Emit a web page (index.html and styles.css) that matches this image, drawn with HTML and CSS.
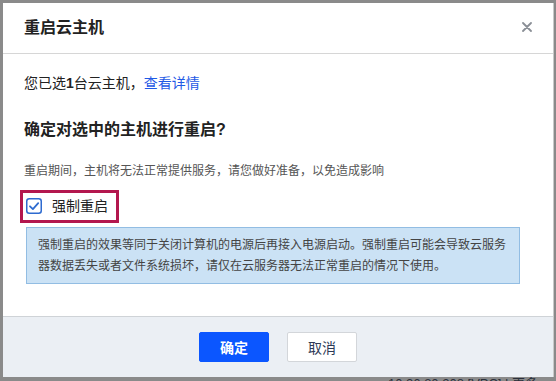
FILE: index.html
```html
<!DOCTYPE html>
<html lang="zh-CN">
<head>
<meta charset="utf-8">
<title>重启云主机</title>
<link rel="stylesheet" href="styles.css">
</head>
<body>
<div class="backdrop-text">10.26.80.208 [VPC] | 更多</div>
<div class="modal">
  <div class="modal-header">
    <div class="modal-title">重启云主机</div>
    <svg class="close" width="10" height="10" viewBox="0 0 10 10"><path d="M1 1L9 9M9 1L1 9" stroke="#8a8f96" stroke-width="1.8" stroke-linecap="round"/></svg>
  </div>
  <div class="modal-body">
    <p class="selected">您已选<b>1</b>台云主机，<a class="link">查看详情</a></p>
    <h3 class="question">确定对选中的主机进行重启?</h3>
    <p class="desc">重启期间，主机将无法正常提供服务，请您做好准备，以免造成影响</p>
    <div class="force-row">
      <svg class="checkbox" width="16" height="16" viewBox="0 0 16 16"><rect x="0.75" y="0.75" width="14.5" height="14.5" rx="2.5" fill="#fff" stroke="#2e6bd0" stroke-width="1.5"/><path d="M4 8.3L6.9 11.1L12.2 5.2" fill="none" stroke="#2e6bd0" stroke-width="1.8" stroke-linecap="round" stroke-linejoin="round"/></svg>
      <span class="force-label">强制重启</span>
    </div>
    <div class="info">强制重启的效果等同于关闭计算机的电源后再接入电源启动。强制重启可能会导致云服务器数据丢失或者文件系统损坏，请仅在云服务器无法正常重启的情况下使用。</div>
  </div>
  <div class="modal-footer">
    <button class="btn btn-primary">确定</button>
    <button class="btn btn-default">取消</button>
  </div>
</div>
</body>
</html>
```
FILE: styles.css
```css
html, body {
  margin: 0;
  padding: 0;
}
body {
  width: 556px;
  height: 381px;
  overflow: hidden;
  background: #8a8a8a;
  font-family: "Liberation Sans", "Noto Sans CJK SC", sans-serif;
  color: #222;
  position: relative;
  padding: 3px 3px 0 3px;
  box-sizing: border-box;
}
.backdrop-text {
  position: absolute;
  left: 388px;
  top: 376px;
  font-size: 13px;
  line-height: 16px;
  color: #2a2f3a;
  white-space: nowrap;
}
.modal {
  position: relative;
  width: 550px;
  height: 374px;
  background: #fff;
  display: flex;
  flex-direction: column;
  box-shadow: 1px 0 0 #c9c9c9;
}
.modal-header {
  height: 50px;
  flex: none;
  border-bottom: 1px solid #d6d6d6;
  display: flex;
  align-items: center;
  justify-content: space-between;
  padding: 0 21px 0 21px;
}
.modal-title {
  font-size: 16px;
  font-weight: 700;
  color: #222;
  line-height: 22px;
  margin-top: 0;
}
.close {
  display: block;
  margin-top: -2px;
}
.modal-body {
  flex: 1;
  padding: 19px 21px 0 21px;
}
.selected {
  margin: 0;
  font-size: 14px;
  line-height: 20px;
  color: #222;
}
.selected b {
  font-weight: 700;
}
.link {
  color: #1f5ae6;
}
.question {
  margin: 26px 0 0 0;
  font-size: 16px;
  font-weight: 700;
  line-height: 22px;
  color: #222;
}
.desc {
  margin: 21px 0 0 0;
  font-size: 12px;
  line-height: 18px;
  color: #555;
}
.force-row {
  display: inline-flex;
  align-items: center;
  gap: 10px;
  margin: 10px 0 0 -4px;
  border: 3px solid #b3174e;
  padding: 5px 8px 6px 3px;
}
.checkbox {
  display: block;
}
.force-label {
  font-size: 14px;
  line-height: 16px;
  color: #222;
}
.info {
  margin: 4px 0 0 2px;
  width: 494px;
  box-sizing: border-box;
  background: #cbe2f5;
  border: 1px solid #92bde3;
  padding: 7px 12px 6px 11px;
  font-size: 12px;
  line-height: 21px;
  color: #444;
}
.modal-footer {
  flex: none;
  height: 60px;
  border-top: 1px solid #cfd3d7;
  background: #ebeff4;
  display: flex;
  align-items: center;
  justify-content: center;
  gap: 18px;
}
.btn {
  width: 70px;
  height: 30px;
  border-radius: 2px;
  font-family: "Liberation Sans", "Noto Sans CJK SC", sans-serif;
  font-size: 14px;
  padding: 0;
  cursor: pointer;
}
.btn-primary {
  background: #0b56ff;
  border: 1px solid #0b56ff;
  color: #fff;
  font-weight: 700;
}
.btn-default {
  background: #fff;
  border: 1px solid #d3d6da;
  color: #2d3a56;
}
```
